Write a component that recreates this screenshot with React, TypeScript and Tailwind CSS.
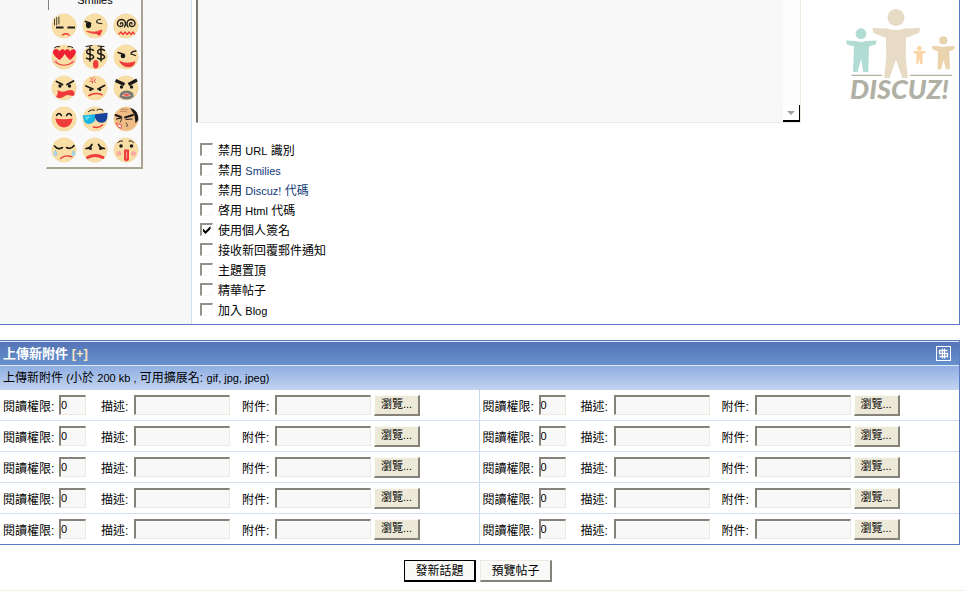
import type { ReactNode } from "react";

const INK = "#1c1a18";
const RED = "#ee3b3b";

function Latin({ children }: { children: ReactNode }) {
  return <span className="text-[11px]">{children}</span>;
}

function Face({ name, skin = "#f9dfa6", children }: { name: string; skin?: string; children: ReactNode }) {
  return (
    <button type="button" aria-label={name} className="flex h-[31px] w-[31px] items-center justify-center">
      <svg
        width="26"
        height="26"
        viewBox="0 0 26 26"
        fill="none"
        stroke={INK}
        strokeWidth="1.5"
        strokeLinecap="round"
        strokeLinejoin="round"
      >
        <circle cx="13" cy="13" r="12.1" fill={skin} stroke="#f0d59c" strokeWidth="0.7" />
        {children}
      </svg>
    </button>
  );
}

function Faces() {
  return (
    <div className="grid grid-cols-[repeat(3,31px)]">
      <Face name="speechless">
        <path d="M3.5 6v6M5.7 4.500v7.500M7.900 4v7" strokeWidth="0.8" />
        <path d="M5 14.500h7.500M16.500 14.500H24" strokeWidth="2.200" strokeLinecap="butt" />
        <path d="M11.500 22q3.500-2.500 6.500 0" stroke={RED} />
      </Face>
      <Face name="naughty">
        <ellipse cx="6.500" cy="12" rx="2.600" ry="3.200" fill={INK} stroke="none" />
        <path d="M3.500 8.500l5 2" strokeWidth="1.800" />
        <path d="M18.500 6.200q-5 .5-3.500 3.500l5 1" strokeWidth="1.100" />
        <path d="M5 18.500q8 2 15-1.500l-2 5q-2 1-3-1.500-5 .5-10-2z" fill={RED} stroke={RED} strokeWidth="0.8" />
      </Face>
      <Face name="dizzy">
        <path d="M7.500 11q0-1.800 1.600-1.300 1.700 1.400.2 3.200-2.400 1.500-4.300-.5-1.500-3.100 1.100-5.200 3.400-1.700 5.700.8 1.800 3.200-.4 5.900" strokeWidth="1.300" />
        <path d="M19 11q0-1.800-1.600-1.300-1.700 1.400-.2 3.200 2.400 1.500 4.300-.5 1.500-3.100-1.100-5.200-3.400-1.700-5.700.8-1.800 3.200.4 5.900" strokeWidth="1.300" />
        <path d="M6 21l2-2 2 2.500 2-2.500 2 2.500 2-2.500 2 2.500 2-2.500 1.500 2" stroke={RED} strokeWidth="1.300" />
      </Face>
      <Face name="in love">
        <path d="M3.500 3.700q2-2 5-1M17 2.700q3-1 5 1" strokeWidth="1" />
        <path d="M8.500 16C3 12 .8 9 2.500 6.300 4.800 4 7.500 5 8.500 7.500c1-2.500 4-3.300 5.200-1C15 9.500 12.500 12.500 8.500 16zM19.300 16c-4.500-3.500-6.500-6.500-5.300-9.200 1.300-2.400 4.300-1.800 5.300.7 1-2.400 4-3 5.200-.9 1.300 2.700-1.500 6-5.200 9.400z" fill="#ee2233" stroke="none" />
        <ellipse cx="4.500" cy="17.500" rx="2" ry="1.500" fill="#f5a898" stroke="none" />
        <ellipse cx="22" cy="17.500" rx="2" ry="1.500" fill="#f5a898" stroke="none" />
        <path d="M5 18.500q8 5.500 16.500 0" stroke={RED} strokeWidth="1.200" />
      </Face>
      <Face name="greedy">
        <path d="M4 2.500l6-1M16 2l6 .5" strokeWidth="1" />
        <path d="M11.500 6.300Q8 4 5 6.500q-1.200 3 2.700 3.800 4.300.7 3.800 3.500-2.800 2.800-7 .3M8 3v14" strokeWidth="1.500" />
        <path d="M22.500 6.300q-3.500-2.300-6.500.2-1.200 3 2.700 3.800 4.300.7 3.800 3.500-2.800 2.800-7 .3M19 3v14" strokeWidth="1.500" />
        <ellipse cx="13.700" cy="20.200" rx="2.700" ry="4.300" fill={RED} stroke="none" />
      </Face>
      <Face name="wink">
        <path d="M5 8.500l6 2" />
        <circle cx="10" cy="12" r="2.300" fill={INK} stroke="none" />
        <path d="M23 7q-5 .5-5 3l4.500 1.500" strokeWidth="1.300" />
        <path d="M6 16.500q7 4 16.500.8-1 6-7.500 6-6.500-.3-9-6.800z" fill={RED} stroke="none" />
      </Face>
      <Face name="shouting">
        <path d="M5.500 6.500l6 3M22.500 6l-6.500 3.500" strokeWidth="1.800" />
        <circle cx="9" cy="11" r="1.700" fill={INK} stroke="none" />
        <circle cx="18.500" cy="11" r="1.700" fill={INK} stroke="none" />
        <path d="M6.500 15q5 3 10 .5 6-1.500 7 2.500.500 4-4 2.500-4-1.500-7 1.500-5 2.500-7.500-.5 2.500-3 1.500-6.500z" fill={RED} stroke="none" />
      </Face>
      <Face name="angry">
        <path d="M8.500 3l1.500 1.500 2-2M8 6.500l2-.5M13.500 4l-1.500 2 1.500 1.500M10.500 8V6.500" stroke={RED} strokeWidth="0.900" />
        <path d="M4 11l7 3M22.500 10.500l-6.500 3.500" strokeWidth="1.800" />
        <circle cx="8.500" cy="14.800" r="1.400" fill={INK} stroke="none" />
        <circle cx="18" cy="14.800" r="1.400" fill={INK} stroke="none" />
        <path d="M7 20.500q6-3.500 13-.8" stroke={RED} />
      </Face>
      <Face name="furious">
        <path d="M2.500 5.500l9 4M24 5l-8.500 4.500" strokeWidth="3.200" strokeLinecap="butt" />
        <circle cx="8.500" cy="12" r="1.700" fill={INK} stroke="none" />
        <circle cx="18.500" cy="12" r="1.700" fill={INK} stroke="none" />
        <path d="M6.500 22q-.5-6 7-6.500 8 .5 7 6.500-7 5-14 0z" fill="#7b7772" stroke="none" />
        <path d="M9.500 20.500q4-4 8 0-4 1.500-8 0z" fill={RED} stroke="#f2c9b0" strokeWidth="0.800" />
      </Face>
      <Face name="laughing">
        <path d="M5.500 9.500q2.500-4 5 0M15.500 9.500q2.500-4 5 0" />
        <path d="M4.300 12.500q8.500 1.500 17.400 0-1.500 8.700-8.700 9-7.200-.3-8.700-9z" fill={RED} stroke="none" />
      </Face>
      <Face name="cool">
        <path d="M6.500 5.500q3-2.500 6-1.500M15 4q4-2 6 .5" strokeWidth="1" />
        <path d="M.5 9.500L13 8.300v6.500q-7 6-10.500 1z" fill="#17b4e8" stroke="none" />
        <path d="M13 8.300l12.500-1.500q.5 9.500-5 10-5.500.5-7.500-5z" fill="#16439d" stroke="none" />
        <path d="M3 10.500l6-.5-5 5z" fill="#5ddbe6" stroke="none" />
        <path d="M11.500 21q5 1.500 9-2" stroke={RED} strokeWidth="1.600" />
      </Face>
      <Face name="old man" skin="#efbb87">
        <path d="M17 1.800q9 2.500 8.200 12.500l-2.700 3-1-8z" fill={INK} stroke="none" />
        <path d="M8 3.500q4-1.500 7 .5M7.500 5.500q3-1 6 .3" stroke="#a87345" strokeWidth="0.700" />
        <path d="M2.500 9l5.500 2M12 11.500l8-2.500" strokeWidth="1.900" />
        <path d="M3.500 13l4-.8M13 13.500l6-.5" strokeWidth="1.200" />
        <path d="M9 12l-1.500 4M13 17q2.500 1 1 3.500" strokeWidth="0.800" />
        <path d="M3.500 17.500l5 1.500-.5 3.500q-3.500-1-4.500-5z" fill="#fff" stroke={RED} strokeWidth="0.900" />
      </Face>
      <Face name="crying">
        <path d="M3.500 9q3.500 4.500 8 1.500M15.500 10.500q4.500 2.500 7.500-2" strokeWidth="1.600" />
        <path d="M4.500 13.500q-3.500 5 0 5 3 0 0-5zM22.500 13.500q-3 5 0 5 3 0 0-5z" fill="#a8dcf3" stroke="#7abde2" strokeWidth="0.500" />
        <path d="M9.500 21.500q4-3.500 8-2.500l3.500.8" stroke={RED} strokeWidth="1.300" />
      </Face>
      <Face name="sad">
        <path d="M4 11.500q4 0 6-4M22.500 11.500q-4 0-6-4" strokeWidth="1.700" />
        <circle cx="8.500" cy="11.500" r="1.500" fill={INK} stroke="none" />
        <circle cx="18.500" cy="11.500" r="1.500" fill={INK} stroke="none" />
        <path d="M5.500 20.500q7.500-4 15.500 0" stroke={RED} strokeWidth="2.800" />
      </Face>
      <Face name="shocked">
        <path d="M5 5.500q2-2.500 4.500-1.500M16 4q3-1 4.500 1.500" strokeWidth="1" />
        <circle cx="8" cy="9" r="1.800" fill={INK} stroke="none" />
        <circle cx="18.500" cy="9" r="1.800" fill={INK} stroke="none" />
        <circle cx="6" cy="16.500" r="2.500" fill="#f7aaa0" stroke="none" />
        <circle cx="20.500" cy="16.500" r="2.500" fill="#f7aaa0" stroke="none" />
        <path d="M11 12.500h5V23l-2.500 1.500L11 23z" fill={RED} stroke="none" />
        <path d="M13.500 15v6" stroke="#f9b0a4" strokeWidth="0.900" />
      </Face>
    </div>
  );
}

function Logo() {
  return (
    <svg width="110" height="100" viewBox="0 0 110 100" role="img" aria-label="Discuz!" className="shrink-0">
      <g fill="#b1dcd3">
        <circle cx="16" cy="27.700" r="5.400" />
        <path d="M1 34.500l10 .5q5 2 10 0l10.700-.5-1 4L24 40.500 23.300 66h-5L16 53l-3.300 13H8l1-25.500L2 38.500z" />
      </g>
      <g fill="#e8dbc6">
        <circle cx="51" cy="11.500" r="8.500" />
        <path d="M27.300 22l15 .5q8.500 3 17 0l16-.5-1.300 5-13 5-.3 18 2 22h-5.400L51 53.500 44.500 72h-5.200l2-22-.3-18-12.500-5z" />
      </g>
      <g fill="#fbd3a4">
        <circle cx="74.300" cy="42.300" r="2.400" />
        <path d="M68.300 45h12.400l-.5 2-2.700 1 .2 10h-2.200l-1-5-1.200 5h-2l.2-10-2.700-1z" />
      </g>
      <g fill="#ead4ae">
        <circle cx="98.300" cy="34.400" r="4.100" />
        <path d="M87 40l8 .3q3.500 1.500 7 0L110 40l-.8 3.300-4.900 2 .7 18h-4L98.500 54 96 63.500h-3.500l.5-18-5.200-2z" />
      </g>
      <path d="M6.300 69.300H37M65 69.300h42" stroke="#b2b0a3" strokeWidth="1.300" />
      <text x="5" y="93" fill="#b1b0a4" fontSize="27" fontWeight="900" fontStyle="italic" fontFamily="Lato, sans-serif">
        DISCUZ!
      </text>
    </svg>
  );
}

const link = "text-[#123a78]";

const options: { id: string; label: ReactNode; on?: boolean }[] = [
  { id: "url", label: <>禁用 <Latin>URL</Latin> 識別</> },
  { id: "smilies", label: <>禁用 <a href="#smilies" className={link}><Latin>Smilies</Latin></a></> },
  { id: "code", label: <>禁用 <a href="#code" className={link}><Latin>Discuz!</Latin> 代碼</a></> },
  { id: "html", label: <>啓用 <Latin>Html</Latin> 代碼</> },
  { id: "signature", label: "使用個人簽名", on: true },
  { id: "notify", label: "接收新回覆郵件通知" },
  { id: "sticky", label: "主題置頂" },
  { id: "digest", label: "精華帖子" },
  { id: "blog", label: <>加入 <Latin>Blog</Latin></> },
];

function Option({ id, label, on }: { id: string; label: ReactNode; on?: boolean }) {
  return (
    <div className="flex h-5 items-center gap-[5px]">
      <span className="grid h-[13px] w-[13px]">
        <input
          id={id}
          type="checkbox"
          defaultChecked={on}
          className="peer col-start-1 row-start-1 h-[13px] w-[13px] appearance-none border-t-2 border-r border-b border-l-2 border-t-[#93918a] border-r-[#f8f7f4] border-b-[#f8f7f4] border-l-[#93918a] bg-white"
        />
        <svg
          viewBox="0 0 13 13"
          className="pointer-events-none invisible col-start-1 row-start-1 h-[13px] w-[13px] peer-checked:visible"
        >
          <path d="M3 5.500l2.500 2.500L10.500 3v3L5.500 11 3 8.500z" fill="#000" />
        </svg>
      </span>
      <label htmlFor={id} className="pt-1">{label}</label>
    </div>
  );
}

const sunken =
  "h-5 border-t-2 border-r border-b border-l-2 border-t-[#85827a] border-r-[#eceae0] border-b-[#eceae0] border-l-[#85827a] bg-[#f8f8f8] outline-none";

function Attachment({ index }: { index: number }) {
  return (
    <div className="flex h-[30px] items-center pl-[3px]">
      <label htmlFor={`perm${index}`} className="w-14 pt-1">閱讀權限:</label>
      <input id={`perm${index}`} type="text" defaultValue="0" className={`${sunken} w-[27px] pb-[2px] text-[11px]`} />
      <label htmlFor={`desc${index}`} className="ml-[15px] w-[33px] pt-1">描述:</label>
      <input id={`desc${index}`} type="text" className={`${sunken} w-24`} />
      <label htmlFor={`file${index}`} className="ml-3 w-[33px] pt-1">附件:</label>
      <input id={`file${index}`} type="text" className={`${sunken} w-24`} />
      <button
        type="button"
        className="ml-[3px] flex h-[21px] w-[46px] items-center justify-center border-t border-r-2 border-b-2 border-l border-t-[#faf9f2] border-r-[#85827a] border-b-[#85827a] border-l-[#faf9f2] bg-[#ece9d8] pb-[2px] text-[11px]"
      >
        瀏覽...
      </button>
    </div>
  );
}

export default function App() {
  return (
    <div className="overflow-hidden bg-white font-['Liberation_Sans','Noto_Sans_CJK_TC',sans-serif] text-[12px] leading-[14px] text-black">
      <div className="pr-[5px]">
        <section className="flex border-r border-b border-[#5a7abf]">
          <aside className="w-[192px] shrink-0 border-r border-[#d3e2ee] bg-[#f7f7f7] pl-[46px]">
            <div className="w-[97px] border-r-2 border-b-2 border-l border-r-[#aaa394] border-b-[#aaa394] border-l-[#f3f1e8] bg-[#f9f9f9] pl-px">
              <div className="flex h-[10px] items-end justify-center border-l border-l-[#85827a] pb-[3px]">
                <Latin>Smilies</Latin>
              </div>
              <Faces />
              <div className="h-[2px]" />
            </div>
          </aside>
          <div className="min-w-0 grow pl-1">
            <div className="flex justify-between pr-1">
              <div className="flex h-[123px] w-[605px] border-r border-b border-l-2 border-r-[#ebebe0] border-b-[#ebebe0] border-l-[#7b7970]">
                <textarea aria-label="內容" className="grow resize-none bg-[#f8f8f8] outline-none" />
                <div className="flex w-[17px] flex-col justify-end bg-[#fdfdfd]">
                  <button
                    type="button"
                    aria-label="向下捲動"
                    className="flex h-[17px] items-center justify-center border-r border-b-2 border-black bg-white"
                  >
                    <svg width="8" height="4" viewBox="0 0 8 4">
                      <path d="M0 0h8L4 4z" fill="#a3a198" />
                    </svg>
                  </button>
                </div>
              </div>
              <div className="pt-[6px]">
                <Logo />
              </div>
            </div>
            <div className="pt-4 pb-[5px] pl-1">
              {options.map((o) => (
                <Option key={o.id} {...o} />
              ))}
            </div>
          </div>
        </section>

        <section className="mt-[15px] border-t border-r border-b border-[#5a7abf]">
          <header className="flex h-[25px] items-center justify-between border-t border-b border-[#dfe9f8] bg-linear-to-b from-[#5574b5] to-[#6691cd] pr-2 pl-[3px]">
            <h2 className="text-[13px] font-bold text-white">
              上傳新附件 <a href="#more" className="text-[#f7e4c0]">[+]</a>
            </h2>
            <button type="button" aria-label="收合" className="h-[15px] w-[15px] border border-white">
              <svg width="13" height="13" viewBox="0 0 13 13" fill="none" stroke="#fff">
                <path d="M10.500 3.500h-8v3h8v3h-8" strokeWidth="1.300" />
                <path d="M5.500 1.500v10M7.500 1.500v10" strokeWidth="1" />
              </svg>
            </button>
          </header>
          <p className="flex h-6 items-center bg-linear-to-b from-[#8faee2] to-[#c3d4f1] pl-[3px]">
            <span>
              上傳新附件 <Latin>(</Latin>小於 <Latin>200 kb ,</Latin> 可用擴展名: <Latin>gif, jpg, jpeg)</Latin>
            </span>
          </p>
          {[0, 1, 2, 3, 4].map((row) => (
            <div key={row} className="grid grid-cols-2 border-b border-[#d3dff0] last:border-b-0">
              <div className="border-r border-[#c9daee]">
                <Attachment index={row * 2} />
              </div>
              <Attachment index={row * 2 + 1} />
            </div>
          ))}
        </section>
      </div>

      <div className="flex items-start justify-center gap-1 border-b border-[#f3f3e4] pt-[15px] pr-[9px] pb-2">
        <button type="submit" className="h-[22px] w-[72px] border border-r-2 border-b-2 border-black bg-[#f9f9f7]">
          發新話題
        </button>
        <button
          type="button"
          className="h-[22px] w-[72px] border-t border-r-2 border-b-2 border-l border-t-[#eceade] border-r-[#85827a] border-b-[#85827a] border-l-[#eceade] bg-[#f9f9f7]"
        >
          預覽帖子
        </button>
      </div>
    </div>
  );
}
